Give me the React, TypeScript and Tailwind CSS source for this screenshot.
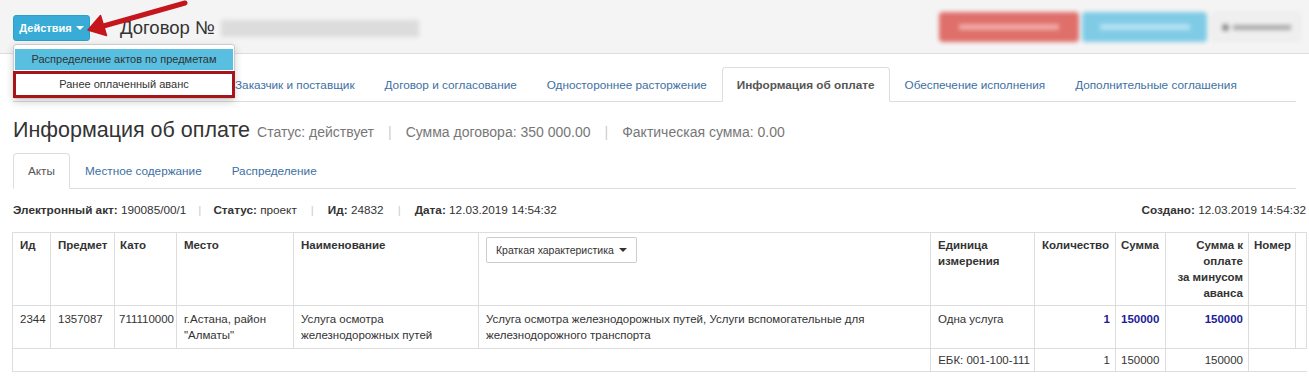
import React from 'react';

const mainTabs = [
    'Заказчик и поставщик',
    'Договор и согласование',
    'Одностороннее расторжение',
    'Информация об оплате',
    'Обеспечение исполнения',
    'Дополнительные соглашения',
];

const cols = [38, 64, 62, 117, 185, 452, 104, 81, 50, 83, 47, 11];

function Sep({ m = 'mx-[14px]' }: { m?: string }) {
    return <span className={`${m} text-[#ccc]`}>|</span>;
}

export default function App() {
    return (
        <div className="relative w-[1309px] h-[383px] overflow-hidden bg-white font-['Liberation_Sans',Arial,sans-serif] text-[#333]">
            {/* top bar */}
            <div className="h-[54px] bg-[#f4f4f4] border-b border-[#ddd] flex items-start pl-[13px] pr-[9px]">
                <button className="mt-[15px] h-[26px] w-[77px] rounded-[3px] bg-[#38acd6] border border-[#2fa0cb] text-white text-[11px] font-bold flex items-center justify-center gap-[4px]">
                    Действия
                    <span className="inline-block w-0 h-0 border-l-[4px] border-r-[4px] border-t-[4px] border-l-transparent border-r-transparent border-t-white" />
                </button>
                <div className="mt-[15px] ml-[30px] flex items-center h-[26px]">
                    <span className="text-[18.5px] leading-[24px] text-[#333]">Договор №</span>
                    <div className="ml-[6px] w-[198px] h-[17px] bg-[#dcdcdc] blur-[2px]" />
                </div>
                <div className="ml-auto mt-[12px] flex items-center gap-[3px]">
                    <div className="w-[140px] h-[30px] rounded-[4px] bg-[#df6f6a] blur-[2px] flex items-center justify-center">
                        <div className="w-[100px] h-[6px] bg-[#f0aaa6]" />
                    </div>
                    <div className="w-[125px] h-[30px] rounded-[4px] bg-[#7fcbe6] blur-[2px] flex items-center justify-center">
                        <div className="w-[90px] h-[6px] bg-[#b6e2f2]" />
                    </div>
                    <div className="ml-[2px] w-[88px] h-[28px] rounded-[3px] bg-[#efefef] border border-[#e4e4e4] blur-[2px] flex items-center justify-center gap-[4px]">
                        <div className="w-[7px] h-[7px] rounded-full bg-[#888]" />
                        <div className="w-[58px] h-[5px] bg-[#aaa]" />
                    </div>
                </div>
            </div>

            {/* main tabs */}
            <ul className="mt-[13px] mx-[13px] flex border-b border-[#ddd] text-[11.75px] leading-[15px]">
                <li className="w-[207px] -mb-px border border-transparent" />
                {mainTabs.map((t) => {
                    const active = t === 'Информация об оплате';
                    return (
                        <li
                            key={t}
                            className={
                                active
                                    ? '-mb-px px-[14px] py-[9px] border border-[#ddd] border-b-white rounded-t-[4px] bg-white font-bold text-[#555]'
                                    : '-mb-px px-[14px] py-[9px] border border-transparent text-[#3d6fa3]'
                            }
                        >
                            {t}
                        </li>
                    );
                })}
            </ul>

            {/* heading */}
            <div className="mt-[14px] ml-[13px] flex items-baseline">
                <h1 className="text-[21.5px] leading-[28px] text-[#333]">Информация об оплате</h1>
                <div className="ml-[7px] text-[14px] text-[#777]">
                    Статус: действует
                    <Sep />
                    Сумма договора: 350 000.00
                    <Sep />
                    Фактическая сумма: 0.00
                </div>
            </div>

            {/* sub tabs */}
            <ul className="mt-[9px] mx-[13px] flex border-b border-[#ddd] text-[11.75px] leading-[16px]">
                <li className="-mb-px px-[14px] py-[9px] border border-[#ddd] border-b-white rounded-t-[4px] bg-white text-[#555]">Акты</li>
                <li className="-mb-px px-[14px] py-[9px] border border-transparent text-[#3d6fa3]">Местное содержание</li>
                <li className="-mb-px px-[14px] py-[9px] border border-transparent text-[#3d6fa3]">Распределение</li>
            </ul>

            {/* act info */}
            <div className="mt-[13px] ml-[13px] mr-[3px] flex text-[11.75px] leading-[16px]">
                <span><b>Электронный акт:</b> 190085/00/1</span>
                <Sep m="mx-[12px]" />
                <span><b>Статус:</b> проект</span>
                <Sep m="mx-[14px]" />
                <span><b>Ид:</b> 24832</span>
                <Sep m="mx-[14px]" />
                <span><b>Дата:</b> 12.03.2019 14:54:32</span>
                <span className="ml-auto"><b>Создано:</b> 12.03.2019 14:54:32</span>
            </div>

            {/* table */}
            <table className="mt-[14px] ml-[12px] table-fixed border-collapse text-[11.5px] leading-[16px] w-[1294px]">
                <colgroup>
                    {cols.map((w, i) => (
                        <col key={i} style={{ width: w }} />
                    ))}
                </colgroup>
                <thead>
                    <tr className="align-top [&>th]:border [&>th]:border-[#ddd] [&>th]:px-[7px] [&>th]:py-[4px] [&>th]:font-bold [&>th]:text-left">
                        <th>Ид</th>
                        <th>Предмет</th>
                        <th className="!px-[5px]">Като</th>
                        <th>Место</th>
                        <th>Наименование</th>
                        <th>
                            <span className="inline-flex items-center gap-[5px] h-[26px] px-[9px] border border-[#ccc] rounded-[2px] font-normal text-[10.5px]">
                                Краткая характеристика
                                <span className="inline-block w-0 h-0 border-l-[4px] border-r-[4px] border-t-[4px] border-l-transparent border-r-transparent border-t-[#333]" />
                            </span>
                        </th>
                        <th>Единица измерения</th>
                        <th>Количество</th>
                        <th className="!px-[5px]">Сумма</th>
                        <th className="!text-right !pr-[5px]">
                            Сумма к<br />оплате<br />за минусом<br />аванса
                        </th>
                        <th className="!px-[5px]">Номер</th>
                        <th></th>
                    </tr>
                </thead>
                <tbody>
                    <tr className="align-top [&>td]:border [&>td]:border-[#ddd] [&>td]:px-[7px] [&>td]:py-[5px]">
                        <td>2344</td>
                        <td>1357087</td>
                        <td className="!px-[4px]">711110000</td>
                        <td>г.Астана, район "Алматы"</td>
                        <td>Услуга осмотра железнодорожных путей</td>
                        <td>Услуга осмотра железнодорожных путей, Услуги вспомогательные для железнодорожного транспорта</td>
                        <td>Одна услуга</td>
                        <td className="text-right !pr-[5px] font-bold text-[#1c1c9a]">1</td>
                        <td className="!px-[5px] font-bold text-[#1c1c9a]">150000</td>
                        <td className="text-right !pr-[5px] font-bold text-[#1c1c9a]">150000</td>
                        <td></td>
                        <td></td>
                    </tr>
                    <tr className="align-top [&>td]:border [&>td]:border-[#ddd] [&>td]:px-[7px] [&>td]:py-[3px]">
                        <td colSpan={6}></td>
                        <td className="text-right whitespace-nowrap !pl-[2px] !pr-[4px]">ЕБК: 001-100-111</td>
                        <td className="text-right !pr-[5px]">1</td>
                        <td className="!px-[5px]">150000</td>
                        <td className="text-right !pr-[5px]">150000</td>
                        <td colSpan={2} className="!border-r-0"></td>
                    </tr>
                </tbody>
            </table>

            {/* opened dropdown */}
            <div className="absolute left-[13px] top-[44px] w-[222px] h-[55px] bg-white border border-[#ccc] rounded-[3px] shadow-[0_3px_8px_rgba(0,0,0,0.18)] pt-[4px] text-[11px] text-center">
                <div className="h-[21px] mx-px bg-[#58bfe0] leading-[21px]">Распределение актов по предметам</div>
                <div className="-mx-px mt-px h-[27px] border-[3px] border-[#a5151a] leading-[21px]">Ранее оплаченный аванс</div>
            </div>

            {/* annotation arrow */}
            <svg className="absolute left-0 top-0" width="200" height="50" viewBox="0 0 200 50">
                <line x1="185" y1="3" x2="100" y2="27" stroke="#c4161c" strokeWidth="5" strokeLinecap="round" />
                <polygon points="88,30 100.5,15.5 106.5,35.5" fill="#c4161c" stroke="#c4161c" strokeWidth="1.5" strokeLinejoin="round" />
            </svg>
        </div>
    );
}
